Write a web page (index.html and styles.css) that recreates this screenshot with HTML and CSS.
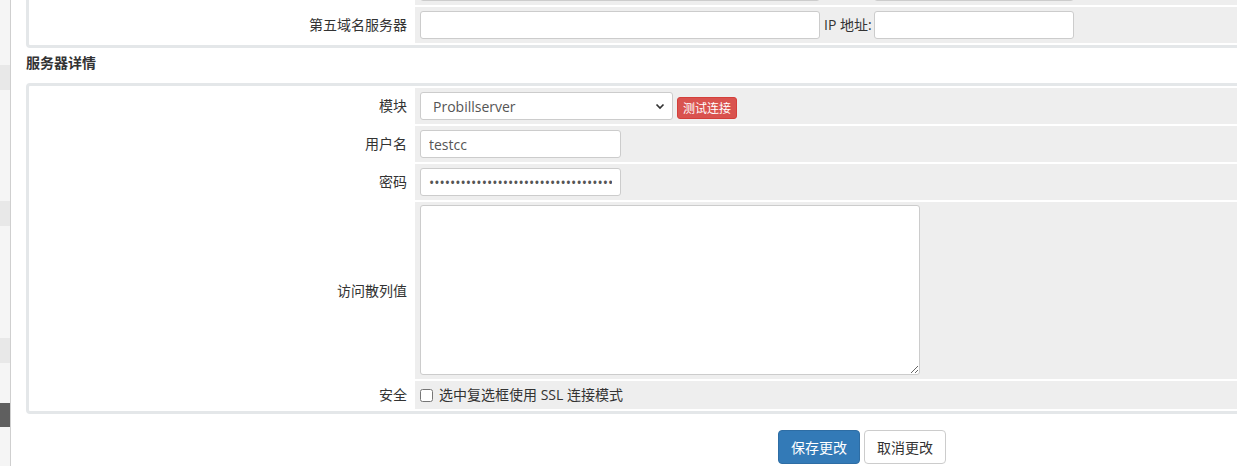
FILE: index.html
```html
<!DOCTYPE html>
<html lang="zh-CN">
<head>
<meta charset="utf-8">
<title>服务器详情</title>
<link rel="stylesheet" href="styles.css">
</head>
<body>
<div class="layout">
  <aside class="sidebar">
    <div class="sb-item sb-a"></div>
    <div class="sb-item sb-b"></div>
    <div class="sb-item sb-c"></div>
    <div class="sb-item sb-active"></div>
  </aside>
  <main class="main">
    <div class="panel">
      <table class="form-table">
        <tr>
          <td class="label-cell"></td>
          <td class="field-cell">
            <div class="field-row">
              <input class="input input-wide" type="text">
              <span class="inline-label inline-spacer"></span>
              <input class="input input-ip" type="text">
            </div>
          </td>
        </tr>
        <tr>
          <td class="label-cell">第五域名服务器</td>
          <td class="field-cell">
            <div class="field-row">
              <input class="input input-wide" type="text">
              <span class="inline-label">IP 地址:</span>
              <input class="input input-ip" type="text">
            </div>
          </td>
        </tr>
      </table>
    </div>

    <h3 class="section-title">服务器详情</h3>

    <div class="panel">
      <table class="form-table">
        <tr>
          <td class="label-cell">模块</td>
          <td class="field-cell">
            <div class="field-row">
              <div class="select-wrap">
                <select class="select">
                  <option>Probillserver</option>
                </select>
                <svg class="chevron" width="10" height="7" viewBox="0 0 10 7"><path d="M1.5 1.5 L5 5 L8.5 1.5" fill="none" stroke="#333" stroke-width="1.7"/></svg>
              </div>
              <button class="btn-xs btn-danger" type="button">测试连接</button>
            </div>
          </td>
        </tr>
        <tr>
          <td class="label-cell">用户名</td>
          <td class="field-cell"><input class="input input-short" type="text" value="testcc"></td>
        </tr>
        <tr>
          <td class="label-cell">密码</td>
          <td class="field-cell"><input class="input input-short" type="password" value="abcdefghijklmnopqrstuvwxyz0123456789"></td>
        </tr>
        <tr>
          <td class="label-cell">访问散列值</td>
          <td class="field-cell cell-textarea"><textarea class="textarea"></textarea></td>
        </tr>
        <tr>
          <td class="label-cell">安全</td>
          <td class="field-cell cell-check">
            <label class="check-label"><input class="checkbox" type="checkbox">选中复选框使用 SSL 连接模式</label>
          </td>
        </tr>
      </table>
    </div>

    <div class="actions">
      <button class="btn btn-primary" type="button">保存更改</button>
      <button class="btn btn-default" type="button">取消更改</button>
    </div>
  </main>
</div>
</body>
</html>
```

FILE: styles.css
```css
html, body {
  margin: 0;
  padding: 0;
  overflow: hidden;
  background: #fff;
}

body {
  font-family: "Open Sans", "Noto Sans CJK SC", sans-serif;
  font-size: 14px;
  color: #333;
  width: 1237px;
  height: 466px;
}

.layout {
  display: flex;
  height: 466px;
}

.sidebar {
  width: 10px;
  flex: none;
  background: #f5f5f5;
  border-right: 1px solid #cfcfcf;
  display: flex;
  flex-direction: column;
}

.sb-item {
  height: 25px;
  background: #e8e8e8;
}

.sb-a { margin-top: 65px; }
.sb-b { margin-top: 111px; }
.sb-c { margin-top: 112px; }
.sb-active { margin-top: 40px; height: 24px; background: #5f5f5f; }

.main {
  flex: none;
  width: 1400px;
  padding-left: 15px;
  margin-top: -36px;
}

.panel {
  border: 3px solid #e4e7e9;
  border-radius: 4px;
  background: #fff;
}

.form-table {
  width: 100%;
  border-collapse: separate;
  border-spacing: 2px;
}

.form-table td {
  padding: 4px 5px;
  vertical-align: middle;
}

.label-cell {
  width: 371px;
  text-align: right;
  padding-right: 6px !important;
  white-space: nowrap;
  line-height: 20px;
}

.field-cell {
  background: #eeeeee;
}

.field-row {
  display: flex;
  align-items: center;
}

.input {
  display: block;
  box-sizing: border-box;
  height: 28px;
  border: 1px solid #cccccc;
  border-radius: 3px;
  background: #fff;
  padding: 0 8px;
  font-family: "Open Sans", "Noto Sans CJK SC", sans-serif;
  font-size: 14px;
  color: #555;
  outline: none;
  margin: 0;
}

.input-wide { width: 400px; }
.input-ip { width: 200px; }
.input-short { width: 201px; }

.inline-label {
  margin: 0 2px 0 4px;
  line-height: 20px;
}

.inline-spacer {
  width: 48px;
}

.select-wrap {
  position: relative;
  width: 253px;
}

.select {
  display: block;
  box-sizing: border-box;
  width: 253px;
  height: 28px;
  border: 1px solid #cccccc;
  border-radius: 3px;
  background: #fff;
  padding: 0 12px;
  font-family: "Open Sans", "Noto Sans CJK SC", sans-serif;
  font-size: 14px;
  color: #555;
  -webkit-appearance: none;
  appearance: none;
  outline: none;
}

.chevron {
  position: absolute;
  right: 8px;
  top: 11px;
  pointer-events: none;
}

.btn-xs {
  margin-left: 4px;
  font-family: "Noto Sans CJK SC", "Open Sans", sans-serif;
  font-size: 12px;
  line-height: 18px;
  padding: 1px 5px;
  border-radius: 3px;
  border: 1px solid #d43f3a;
  cursor: pointer;
  margin-top: 4px;
}

.btn-danger {
  background: #d9534f;
  color: #fff;
}

.cell-textarea {
  padding: 3px 5px 4px !important;
}

.textarea {
  display: block;
  box-sizing: border-box;
  width: 500px;
  height: 170px;
  border: 1px solid #cccccc;
  border-radius: 3px;
  background: #fff;
  margin: 0;
  outline: none;
  resize: both;
}

.cell-check {
  padding: 2px 5px !important;
}

.check-label {
  display: flex;
  align-items: center;
  line-height: 20px;
}

.checkbox {
  width: 13px;
  height: 13px;
  margin: 0 6px 0 0;
}

.section-title {
  margin: 0;
  padding: 6px 0 11px;
  font-size: 14px;
  line-height: 18px;
  font-weight: bold;
  color: #333;
}

.actions {
  display: flex;
  gap: 4px;
  margin-top: 16px;
  padding-left: 752px;
}

.btn {
  font-family: "Noto Sans CJK SC", "Open Sans", sans-serif;
  font-size: 14px;
  line-height: 20px;
  padding: 6px 12px;
  border-radius: 4px;
  cursor: pointer;
}

.btn-primary {
  background: #337ab7;
  border: 1px solid #2e6da4;
  color: #fff;
}

.btn-default {
  background: #fff;
  border: 1px solid #cccccc;
  color: #333;
}
```
